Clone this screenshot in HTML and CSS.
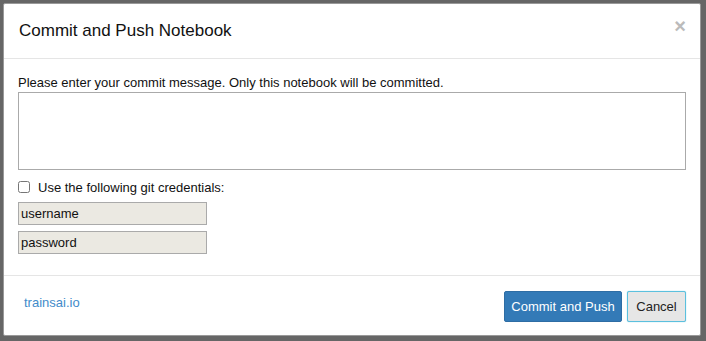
FILE: index.html
```html
<!DOCTYPE html>
<html lang="en">
<head>
    <meta charset="UTF-8">
    <title>Commit and Push Notebook</title>
    <link rel="stylesheet" href="styles.css">
</head>
<body>
    <div class="modal">
        <div class="modal-header">
            <h4>Commit and Push Notebook</h4>
            <span class="close">&times;</span>
        </div>

        <div class="modal-body">
            <label class="message-label" for="message">Please enter your commit message. Only this notebook will be committed.</label>
            <textarea id="message"></textarea>

            <label class="check-row">
                <input type="checkbox">
                <span>Use the following git credentials:</span>
            </label>
            <input class="cred" type="text" value="username">
            <input class="cred" type="text" value="password">
        </div>

        <div class="modal-footer">
            <a class="brand" href="#">trainsai.io</a>
            <div class="actions">
                <button class="btn btn-primary">Commit and Push</button>
                <button class="btn btn-default">Cancel</button>
            </div>
        </div>
    </div>
</body>
</html>
```

FILE: styles.css
```css
* {
    margin: 0;
    padding: 0;
    box-sizing: border-box;
    font-family: 'Liberation Sans', Arial, sans-serif;
}

body {
    background-color: #666;
    padding: 3px 5px 5px 3px;
    height: 341px;
    overflow: hidden;
}

.modal {
    background-color: white;
    border: 1px solid #999;
    border-radius: 2px;
    width: 698px;
    height: 333px;
    display: flex;
    flex-direction: column;
}

.modal-header {
    display: flex;
    justify-content: space-between;
    align-items: center;
    padding: 15px;
    height: 55px;
    border-bottom: 1px solid #e5e5e5;
}

.modal-header h4 {
    font-size: 17px;
    font-weight: normal;
    color: #111;
}

.close {
    color: #bbb;
    font-size: 20px;
    font-weight: bold;
    margin-top: -10px;
    margin-right: -1px;
}

.modal-body {
    padding: 15px 14px 0 14px;
    font-size: 13px;
    color: #111;
}

.message-label {
    display: block;
    line-height: 18px;
}

textarea {
    display: block;
    width: 668px;
    height: 78px;
    border: 1px solid #aaa;
    resize: none;
    margin-bottom: 9px;
}

.check-row {
    display: flex;
    align-items: center;
    gap: 8px;
    height: 16px;
    margin-bottom: 7px;
}

.check-row input {
    width: 12px;
    height: 12px;
    margin: 0;
}

.cred {
    display: block;
    width: 189px;
    height: 23px;
    border: 1px solid #aaa;
    background-color: #ebe9e2;
    font-size: 13px;
    color: #111;
    padding: 0 2px;
    margin-bottom: 6px;
}

.modal-footer {
    margin-top: auto;
    border-top: 1px solid #e5e5e5;
    height: 60px;
    display: flex;
    justify-content: space-between;
    padding: 15px 14px 0 20px;
}

.brand {
    color: #428bca;
    text-decoration: none;
    font-size: 13px;
    margin-top: 4px;
}

.actions {
    display: flex;
    gap: 5px;
    align-items: flex-start;
}

.btn {
    height: 31px;
    font-size: 13px;
    border-radius: 2px;
    white-space: nowrap;
}

.btn-primary {
    background-color: #337ab7;
    border: 1px solid #2e6da4;
    color: white;
    width: 118px;
    padding: 0 4px;
}

.btn-default {
    background-color: #e6e6e6;
    border: 1px solid #5bc0de;
    box-shadow: 0 0 1px #5bc0de;
    color: #222;
    width: 59px;
    padding: 0 4px;
}
```
